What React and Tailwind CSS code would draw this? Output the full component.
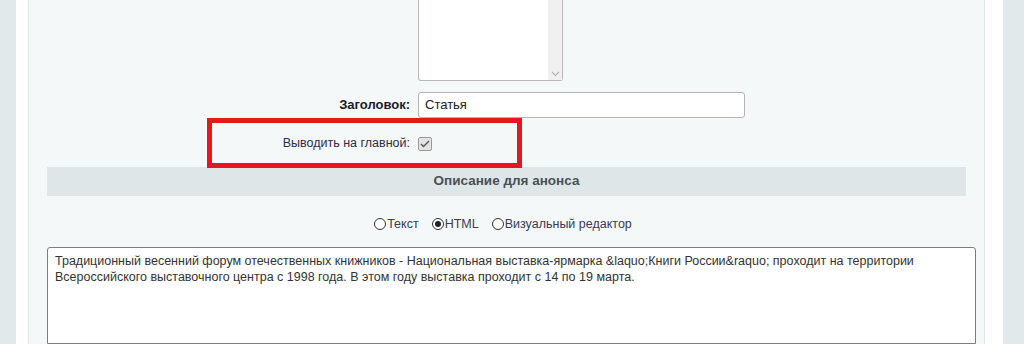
import React from "react";

function Radio({ checked, label }) {
  return (
    <label className="flex items-center">
      <span className="w-[12px] h-[12px] rounded-full border border-[#333] bg-white flex items-center justify-center">
        {checked && <span className="w-[6px] h-[6px] rounded-full bg-[#222]" />}
      </span>
      <span className="ml-[1px] text-[12.5px] text-[#3c3a56]">{label}</span>
    </label>
  );
}

export default function App() {
  return (
    <div className="w-[1024px] h-[344px] overflow-hidden flex bg-white" style={{ fontFamily: '"Liberation Sans", Arial, sans-serif' }}>
      <div className="w-[16px] bg-[#e2e9ea]" />
      <div className="w-[12px] bg-white" />
      <div className="w-[957px] bg-[#f4f8f9] border-l border-r border-[#dfe6e8] flex flex-col">
        {/* top textarea */}
        <div className="grid grid-cols-[381px_1fr] gap-x-[8px]">
          <div />
          <div className="w-[145px] h-[81px] bg-white border border-t-0 border-[#b9b9b9] rounded-b-[3px] flex justify-end">
            <div className="w-[14px] h-full bg-[#f0f0f0] flex items-end justify-center pb-[3px]">
              <svg width="9" height="6" viewBox="0 0 9 6"><path d="M1 1l3.5 3.5L8 1" fill="none" stroke="#b5b5b5" strokeWidth="1.2" /></svg>
            </div>
          </div>
        </div>
        {/* title */}
        <div className="grid grid-cols-[381px_1fr] gap-x-[8px] mt-[11px] items-center">
          <div className="text-right text-[13px] font-bold text-[#1d1b2e]">Заголовок:</div>
          <div className="w-[327px] h-[26px] bg-white border border-[#b4b4b4] rounded-[3px] flex items-center px-[6px] text-[13px] text-[#222]">Статья</div>
        </div>
        {/* show on main */}
        <div className="relative h-[55px]">
          <div className="h-[49px] grid grid-cols-[381px_1fr] gap-x-[8px] items-center">
            <div className="text-right text-[12.5px] text-[#2f2b4a] pt-[2px]">Выводить на главной:</div>
            <div className="pt-[2px]">
              <span className="w-[14px] h-[14px] rounded-[2px] border border-[#9a9a9a] bg-[#e3e3e3] flex items-center justify-center">
                <svg width="10" height="8" viewBox="0 0 10 8"><path d="M1 4l2.5 2.5L9 1" fill="none" stroke="#555" strokeWidth="1.4" /></svg>
              </span>
            </div>
          </div>
          <div className="absolute left-[178px] top-0 w-[315px] h-[50px] border-[5px] border-[#e8161f]" />
        </div>
        {/* header */}
        <div className="mx-[18px] h-[33px] bg-[#dfe6e7] flex items-center justify-center text-[13.5px] font-bold text-[#485155]">
          Описание для анонса
        </div>
        {/* radios */}
        <div className="h-[58px] pt-[5px] flex items-center justify-center pl-[2px]">
          <div className="flex items-center gap-[13px] ml-[-9px]">
            <Radio label="Текст" />
            <Radio checked label="HTML" />
            <Radio label="Визуальный редактор" />
          </div>
        </div>
        {/* textarea */}
        <div className="ml-[18px] mr-[8px] h-[110px] bg-white border border-[#7d7d7d] rounded-t-[3px] px-[7px] pt-[5px] text-[12.5px] leading-[16px] text-[#333] whitespace-nowrap">
          <div>Традиционный весенний форум отечественных книжников - Национальная выставка-ярмарка &amp;laquo;Книги России&amp;raquo; проходит на территории</div>
          <div>Всероссийского выставочного центра с 1998 года. В этом году выставка проходит с 14 по 19 марта.</div>
        </div>
      </div>
      <div className="w-[18px] bg-white" />
      <div className="flex-1 bg-[#e2e9ea]" />
    </div>
  );
}
